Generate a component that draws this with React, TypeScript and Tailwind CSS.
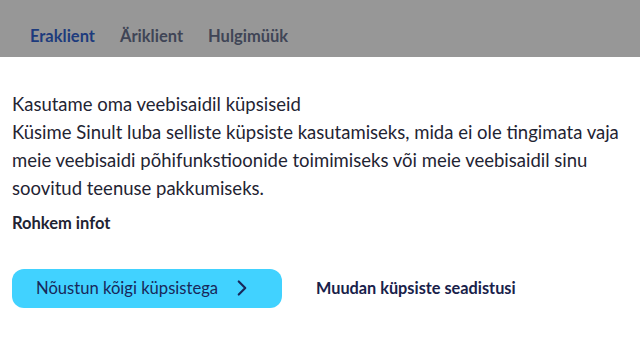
import { ChevronRight } from "lucide-react";

export default function App() {
  return (
    <div className="w-[640px] h-[341px] bg-white font-['Lato',sans-serif] overflow-hidden">
      <nav className="h-[57px] bg-[#979797] flex items-end gap-[25px] pl-[30px] pb-[8px] text-[16.5px] font-bold">
        <span className="text-[#1d3b7d]">Eraklient</span>
        <span className="text-[#3f4556]">Äriklient</span>
        <span className="text-[#3f4556]">Hulgimüük</span>
      </nav>
      <section className="px-3 pt-[33px] text-[#1f2433]">
        <h2 className="text-[18.5px] leading-[28px]">Kasutame oma veebisaidil küpsiseid</h2>
        <p className="text-[18.5px] leading-[28px]">
          Küsime Sinult luba selliste küpsiste kasutamiseks, mida ei ole tingimata vaja meie veebisaidi
          põhifunkstioonide toimimiseks või meie veebisaidil sinu soovitud teenuse pakkumiseks.
        </p>
        <a className="block mt-[9px] text-[16.5px] font-bold text-[#1f2433]">Rohkem infot</a>
        <div className="mt-[33px] flex items-center gap-[34px]">
          <button className="w-[270px] h-[39px] rounded-[12px] bg-[#41d2ff] flex items-center pl-[24px] text-[16.6px] text-[#18285a]">
            Nõustun kõigi küpsistega
            <ChevronRight size={26} strokeWidth={2} className="ml-[11px]" />
          </button>
          <button className="text-[16.3px] font-bold text-[#18214a]">Muudan küpsiste seadistusi</button>
        </div>
      </section>
    </div>
  );
}
